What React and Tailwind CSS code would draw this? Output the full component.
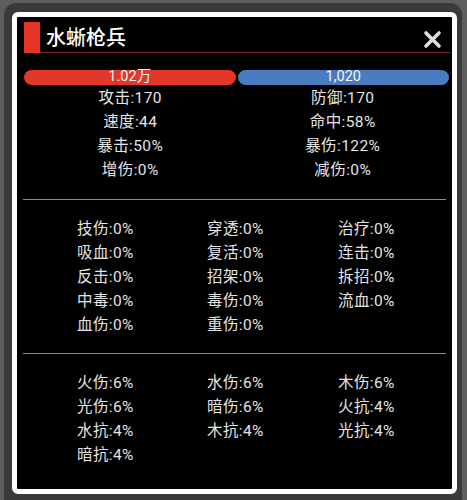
import React from 'react';

const topStats = [
  ['攻击:170', '防御:170'],
  ['速度:44', '命中:58%'],
  ['暴击:50%', '暴伤:122%'],
  ['增伤:0%', '减伤:0%'],
];

const specialStats = [
  '技伤:0%', '穿透:0%', '治疗:0%',
  '吸血:0%', '复活:0%', '连击:0%',
  '反击:0%', '招架:0%', '拆招:0%',
  '中毒:0%', '毒伤:0%', '流血:0%',
  '血伤:0%', '重伤:0%',
];

const elementStats = [
  '火伤:6%', '水伤:6%', '木伤:6%',
  '光伤:6%', '暗伤:6%', '火抗:4%',
  '水抗:4%', '木抗:4%', '光抗:4%',
  '暗抗:4%',
];

const StatGrid = ({ items }) => (
  <div className="grid grid-cols-[130px_131px_1fr] pl-[60px]">
    {items.map((t) => (
      <div key={t} className="h-6 leading-6 text-[15.5px] tracking-[0.4px] text-[#e4e4e4] whitespace-nowrap">
        {t}
      </div>
    ))}
  </div>
);

export default function App() {
  return (
    <div
      className="w-[467px] h-[500px] overflow-hidden bg-[#5e5e5e] pl-[4px] pt-[3px]"
      style={{ fontFamily: 'Roboto, "Noto Sans CJK SC", sans-serif' }}
    >
      <div className="w-[458px] h-[520px] rounded-[12px] bg-[#3a3a3a] pl-[8px] pt-[9px]">
        <div className="w-[445px] h-[482px] rounded-[6px] border-[5px] border-white bg-black">
          {/* header */}
          <div className="flex items-end pt-[5px] pl-[7px] pr-[2px]">
            <div className="w-[16px] h-[31px] bg-[#e53528]" />
            <div className="flex-1 flex items-center justify-between h-[31px] border-b border-[#7a1f28] pl-[6px] pr-[8px]">
              <span className="text-[20px] leading-none text-white font-medium mt-[1px]">水蜥枪兵</span>
              <svg width="19" height="19" viewBox="0 0 19 19" className="mt-[4px]">
                <path d="M3 3L16 16M16 3L3 16" stroke="#dedede" strokeWidth="3.6" strokeLinecap="round" />
              </svg>
            </div>
          </div>

          {/* hp / mp bars */}
          <div className="flex gap-[2px] mt-[17px] px-[7px] pr-[3px]">
            <div className="flex-1 h-[15px] rounded-full bg-[#e3372a] flex items-center justify-center text-[14.5px] leading-none text-[#f4f4f4]">
              1.02万
            </div>
            <div className="flex-1 h-[15px] rounded-full bg-[#4a7cc0] flex items-center justify-center text-[14.5px] leading-none text-[#f4f4f4]">
              1,020
            </div>
          </div>

          {/* base stats */}
          <div className="mt-[1px] px-[7px] pr-[3px]">
            {topStats.map(([a, b]) => (
              <div key={a} className="flex h-6 leading-6 text-[15.5px] tracking-[0.4px] text-[#e4e4e4]">
                <div className="flex-1 text-center">{a}</div>
                <div className="flex-1 text-center">{b}</div>
              </div>
            ))}
          </div>

          <div className="mt-[17px] mx-[6px] h-px bg-[#8c8c8c]" />
          <div className="pt-[17px]">
            <StatGrid items={specialStats} />
          </div>

          <div className="mt-[16px] mx-[6px] h-px bg-[#8c8c8c]" />
          <div className="pt-[17px]">
            <StatGrid items={elementStats} />
          </div>
        </div>
      </div>
    </div>
  );
}
